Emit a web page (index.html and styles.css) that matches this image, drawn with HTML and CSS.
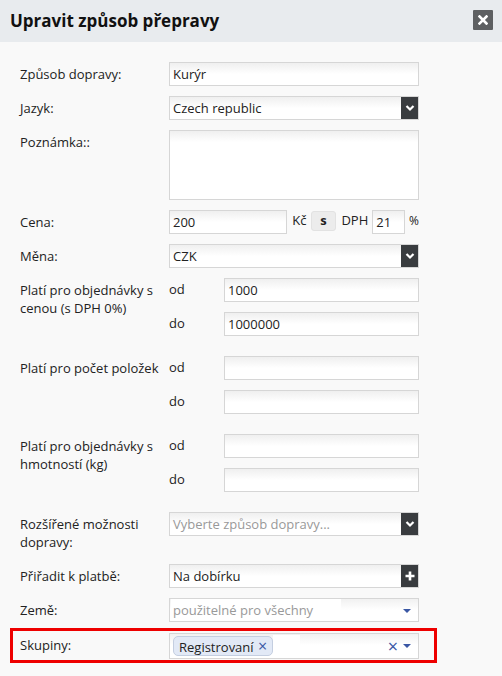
FILE: index.html
```html
<!DOCTYPE html>
<html lang="cs">
<head>
<meta charset="utf-8">
<link rel="stylesheet" href="styles.css">
</head>
<body>
<div class="dialog">
  <div class="header">
    <h1 class="title">Upravit způsob přepravy</h1>
    <span class="close"><svg width="10" height="10" viewBox="0 0 10 10"><path d="M1.5 1.5 L8.5 8.5 M8.5 1.5 L1.5 8.5" stroke="#fff" stroke-width="2.6" stroke-linecap="square"/></svg></span>
  </div>
  <div class="body">
    <div class="row">
      <div class="label">Způsob dopravy:</div>
      <div class="field"><div class="input">Kurýr</div></div>
    </div>
    <div class="row">
      <div class="label">Jazyk:</div>
      <div class="field"><div class="input select"><span class="val">Czech republic</span><span class="btn"><svg width="10" height="8" viewBox="0 0 10 8"><path d="M1.5 2 L5 5.5 L8.5 2" fill="none" stroke="#fff" stroke-width="2.2"/></svg></span></div></div>
    </div>
    <div class="row">
      <div class="label">Poznámka::</div>
      <div class="field"><div class="input textarea"></div></div>
    </div>
    <div class="row">
      <div class="label">Cena:</div>
      <div class="field price">
        <div class="input price-in">200</div>
        <span class="unit">Kč</span>
        <span class="sbtn">s</span>
        <span class="unit">DPH</span>
        <div class="input vat-in">21</div>
        <span class="pct">%</span>
      </div>
    </div>
    <div class="row">
      <div class="label">Měna:</div>
      <div class="field"><div class="input select"><span class="val">CZK</span><span class="btn"><svg width="10" height="8" viewBox="0 0 10 8"><path d="M1.5 2 L5 5.5 L8.5 2" fill="none" stroke="#fff" stroke-width="2.2"/></svg></span></div></div>
    </div>
    <div class="row group">
      <div class="label narrow">Platí pro objednávky s cenou (s DPH 0%)</div>
      <div class="sub">
        <div class="subrow"><span class="sublabel">od</span><div class="input small">1000</div></div>
        <div class="subrow"><span class="sublabel">do</span><div class="input small">1000000</div></div>
      </div>
    </div>
    <div class="row group">
      <div class="label narrow">Platí pro počet položek</div>
      <div class="sub">
        <div class="subrow"><span class="sublabel">od</span><div class="input small"></div></div>
        <div class="subrow"><span class="sublabel">do</span><div class="input small"></div></div>
      </div>
    </div>
    <div class="row group">
      <div class="label narrow">Platí pro objednávky s hmotností (kg)</div>
      <div class="sub">
        <div class="subrow"><span class="sublabel">od</span><div class="input small"></div></div>
        <div class="subrow"><span class="sublabel">do</span><div class="input small"></div></div>
      </div>
    </div>
    <div class="row">
      <div class="label">Rozšířené možnosti dopravy:</div>
      <div class="field"><div class="input select"><span class="val placeholder">Vyberte způsob dopravy...</span><span class="btn"><svg width="10" height="8" viewBox="0 0 10 8"><path d="M1.5 2 L5 5.5 L8.5 2" fill="none" stroke="#fff" stroke-width="2.2"/></svg></span></div></div>
    </div>
    <div class="row">
      <div class="label">Přiřadit k platbě:</div>
      <div class="field"><div class="input select"><span class="val">Na dobírku</span><span class="btn"><svg width="10" height="10" viewBox="0 0 10 10"><path d="M5 0.5 V9.5 M0.5 5 H9.5" stroke="#fff" stroke-width="2.6"/></svg></span></div></div>
    </div>
    <div class="row">
      <div class="label">Země:</div>
      <div class="field"><div class="input s2"><span class="s2search placeholder">použitelné pro všechny</span><span class="arrow"></span></div></div>
    </div>
    <div class="row highlight">
      <div class="label">Skupiny:</div>
      <div class="field"><div class="input s2 multi"><span class="tag">Registrovaní <span class="tagx">×</span></span><span class="s2search blank"></span><span class="clear">×</span><span class="arrow"></span></div></div>
    </div>
  </div>
</div>
</body>
</html>
```

FILE: styles.css
```css
* { box-sizing: border-box; }
html, body { margin: 0; padding: 0; }
body {
  width: 502px;
  height: 676px;
  overflow: hidden;
  background: #f9f9f9;
  font-family: "Open Sans", "DejaVu Sans", sans-serif;
  font-size: 13px;
  color: #222;
}
.header {
  height: 42px;
  background: #e8ebee;
  display: flex;
  align-items: center;
  justify-content: space-between;
  padding: 0 9px 0 10px;
}
.title {
  margin: 0;
  font-size: 17px;
  font-weight: 700;
  color: #111;
  line-height: 22px;
}
.close {
  width: 20px;
  height: 20px;
  background: #5e6062;
  border-radius: 1px;
  display: flex;
  align-items: center;
  justify-content: center;
  margin-top: -2px;
}
.body {
  padding: 20px 0 0 20px;
}
.row {
  display: flex;
  align-items: flex-start;
  margin-bottom: 10px;
}
.row.group { margin-bottom: 20px; }
.label {
  width: 149px;
  flex: none;
  padding: 3px 0;
  line-height: 18px;
}
.label.narrow { width: 149px; padding-right: 8px; }
.field { width: 250px; }
.input {
  height: 24px;
  border: 1px solid #d6d6d6;
  background: linear-gradient(to bottom, #efefef 0, #fff 11px, #fff 100%);
  padding: 0 3px;
  line-height: 22px;
  color: #222;
  white-space: nowrap;
  overflow: hidden;
}
.input.textarea { height: 70px; }
.select {
  display: flex;
  padding-right: 0;
}
.select .val { flex: 1; }
.select .btn {
  width: 18px;
  flex: none;
  height: 24px;
  margin: -1px -1px -1px 0;
  background: #393c3f;
  display: flex;
  align-items: center;
  justify-content: center;
}
.placeholder { color: #999; }
.price { display: flex; align-items: flex-start; }
.price-in { width: 119px; }
.unit { padding: 0 4px 0 5px; line-height: 21px; }
.sbtn {
  width: 26px;
  height: 20px;
  margin-top: 1px;
  background: #ececec;
  border: 1px solid #e2e2e2;
  border-radius: 3px;
  font-weight: 700;
  text-align: center;
  line-height: 17px;
}
.vat-in { width: 33px; margin-left: 0; }
.pct { padding-left: 4px; line-height: 21px; font-size: 12px; }
.sub { display: flex; flex-direction: column; gap: 10px; }
.subrow { display: flex; align-items: flex-start; }
.sublabel { width: 55px; line-height: 23px; }
.input.small { width: 195px; }
.s2 {
  display: flex;
  align-items: center;
  position: relative;
  padding-left: 1px;
  background: linear-gradient(to bottom, #f1f1f1 0, #fff 11px, #fff 100%);
}
.s2search {
  background: #fff;
  height: 22px;
  line-height: 22px;
  width: 170px;
  padding-left: 2px;
}
.s2search.blank { width: 27px; margin-left: 0; }
.s2 .arrow {
  position: absolute;
  right: 7px;
  top: 10px;
  width: 0; height: 0;
  border-left: 4px solid transparent;
  border-right: 4px solid transparent;
  border-top: 4px solid #3a57a4;
}
.row.highlight {
  margin: -4px 0 0 -10px;
  width: 427px;
  border: 3px solid #ee0000;
  padding: 2px 15px 1px 7px;
}
.multi { height: 26px; padding-left: 3px; }
.tag {
  display: inline-block;
  height: 20px;
  line-height: 18px;
  border: 1px solid #c4cee0;
  background: #e2e9f6;
  border-radius: 5px;
  padding: 0 5px 0 5px;
  color: #222;
  flex: none;
}
.tagx { color: #3a57a4; font-size: 16px; margin-left: 1px; }
.clear {
  position: absolute;
  right: 20px;
  top: 1px;
  color: #3a57a4;
  font-size: 18px;
  line-height: 22px;
}
```
